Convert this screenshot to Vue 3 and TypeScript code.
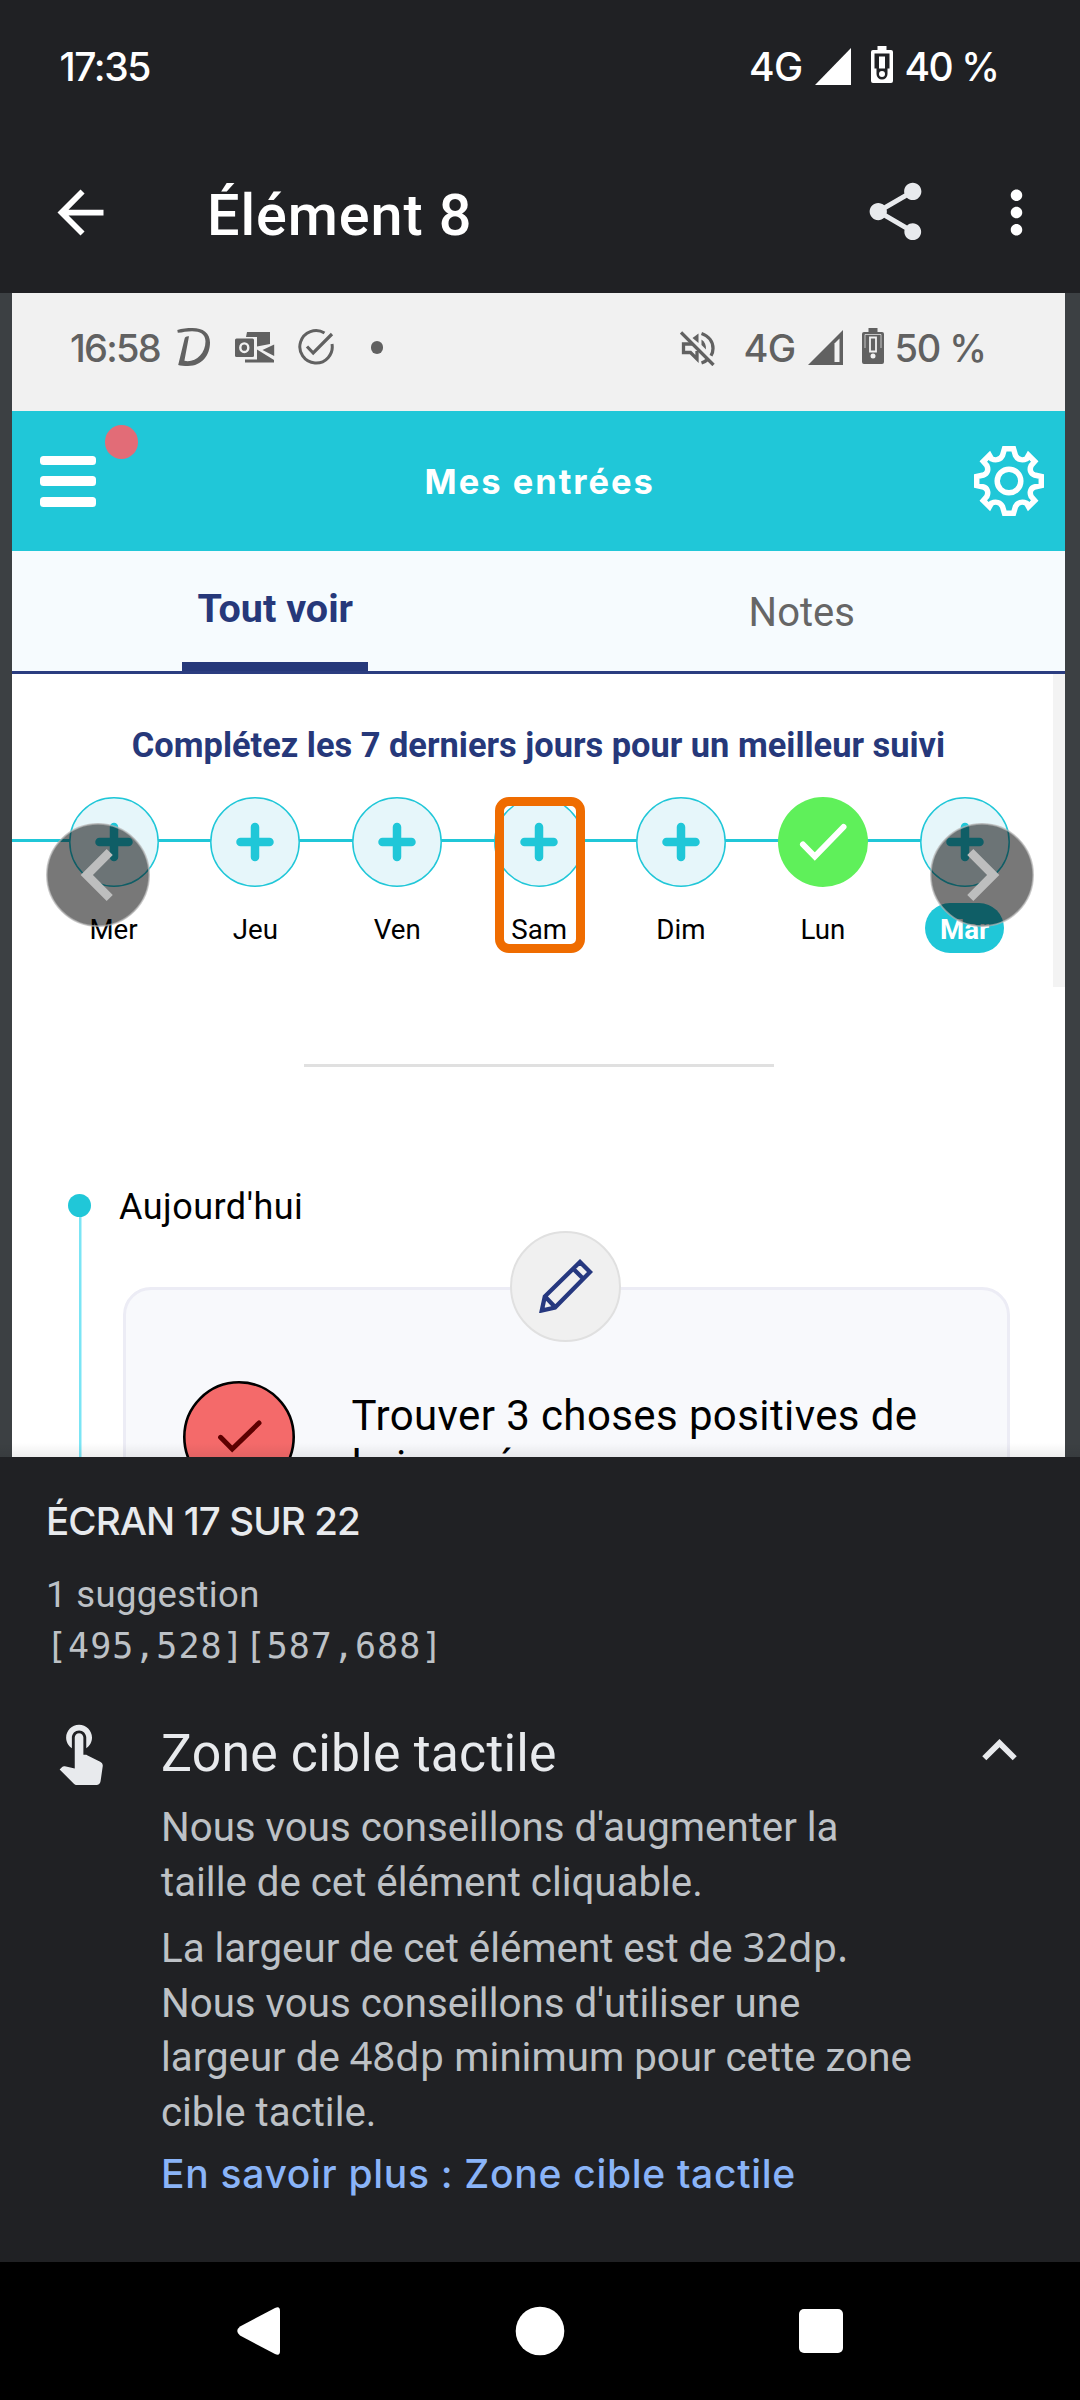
<script setup lang="ts">
interface Day {
  label: string
  done?: boolean
  today?: boolean
  flagged?: boolean
}

const days: Day[] = [
  { label: 'Mer' },
  { label: 'Jeu' },
  { label: 'Ven' },
  { label: 'Sam', flagged: true },
  { label: 'Dim' },
  { label: 'Lun', done: true },
  { label: 'Mar', today: true },
]

const bounds = '[495,528][587,688]'
</script>

<template>
  <div class="phone">
    <header class="top">
      <div class="status">
        <span class="clock">17:35</span>
        <div class="status-right">
          <span class="net">4G</span>
          <svg class="signal" width="36" height="37" viewBox="0 0 36 37"><path d="M36 0V37H0Z" fill="#fff" /></svg>
          <svg class="battery" width="22" height="37" viewBox="0 0 22 37">
            <path d="M6.500 0h9v4H20a2 2 0 0 1 2 2v29a2 2 0 0 1-2 2H2a2 2 0 0 1-2-2V6a2 2 0 0 1 2-2h4.500Z" fill="#fff" />
            <path d="M3.500 7.500h15v15h-2v5.500a5.500 5.500 0 0 1-11 0v-5.500h-2Z" fill="#202124" />
            <path d="M8 10.500h6v12H8Z" fill="#fff" />
            <circle cx="11" cy="28" r="3" fill="#fff" />
          </svg>
          <span class="percent">40 %</span>
        </div>
      </div>
      <div class="appbar">
        <svg class="back" width="69" height="69" viewBox="0 0 24 24" fill="#fff"><path d="M20 11H7.830l5.590-5.590L12 4l-8 8 8 8 1.410-1.410L7.830 13H20v-2z" /></svg>
        <h1>Élément 8</h1>
        <svg class="share" width="69" height="69" viewBox="0 0 24 24" fill="#e8eaed"><path d="M18 16.080c-.76 0-1.440.3-1.960.77L8.910 12.700c.05-.23.09-.46.09-.7s-.04-.47-.09-.7l7.050-4.110c.54.5 1.250.81 2.040.81 1.660 0 3-1.340 3-3s-1.340-3-3-3-3 1.340-3 3c0 .24.04.47.09.7L8.040 9.810C7.500 9.310 6.790 9 6 9c-1.660 0-3 1.340-3 3s1.340 3 3 3c.79 0 1.500-.31 2.040-.81l7.120 4.160c-.05.21-.08.43-.08.65 0 1.610 1.310 2.920 2.920 2.920s2.920-1.310 2.920-2.920-1.310-2.920-2.920-2.920z" /></svg>
        <svg class="more" width="69" height="69" viewBox="0 0 24 24" fill="#fff"><path d="M12 8c1.100 0 2-.9 2-2s-.9-2-2-2-2 .9-2 2 .9 2 2 2zm0 2c-1.100 0-2 .9-2 2s.9 2 2 2 2-.9 2-2-.9-2-2-2zm0 6c-1.100 0-2 .9-2 2s.9 2 2 2 2-.9 2-2-.9-2-2-2z" /></svg>
      </div>
    </header>

    <section class="viewer">
      <div class="shot">
        <div class="shot-status">
          <span class="s-clock">16:58</span>
          <svg class="i-d" width="34" height="40" viewBox="0 0 34 40"><path d="M.3 3C5 1.500 10 1 15.500 1C26 1 33 6 33 15.500C33 28 25 39 11 39C7 39 3.500 38.800 1.200 38L7.500 12C7.900 10 9 9 12 9.200L7.400 33.800C18 36 28.500 27 28.500 14.500C28.500 7 23 4.200 15 4.200C10 4.200 6 5.300 .8 5.800Z" fill="#616161" /></svg>
          <svg class="i-outlook" width="40" height="32" viewBox="0 0 40 32">
            <path d="M12 1H35V13L22 15.500V6H11Z" fill="#616161" />
            <path d="M39.200 13.500V25L27.500 19Z" fill="#616161" />
            <path d="M22 18.500 39 29V31.500H10V28.500H22Z" fill="#616161" />
            <rect x="0" y="7.500" width="19" height="18.500" rx="1.500" fill="#616161" />
            <ellipse cx="9.300" cy="16.700" rx="4" ry="4.300" fill="none" stroke="#f1f1f1" stroke-width="2.400" />
          </svg>
          <svg class="i-check" width="36" height="36" viewBox="0 0 36 36" fill="none" stroke="#616161" stroke-width="3">
            <path d="M26.500 4A16.200 16.200 0 1 0 34 15" />
            <path d="M9 17.500 15.200 24 34 5" stroke-width="3.200" />
          </svg>
          <i class="i-dot"></i>
          <div class="s-right">
            <svg class="i-mute" width="35" height="35" viewBox="0 0 35 35" fill="none" stroke="#616161" stroke-width="3.300">
              <path d="M1 1.500 33.500 34" />
              <path d="M12 13H3.500V21.500H10.500L17 28V20" />
              <path d="M12.500 7 18.500 2.500V12Z" fill="#616161" stroke="none" />
              <path d="M21.500 8.500V14L26 18.500C26.200 14 24.500 10.500 21.500 8.500Z" fill="#616161" stroke="none" />
              <path d="M21.500 2.500C29 5 33 11 33 17.500C33 20 32.300 22.500 31 24.800" />
              <path d="M21.500 32C24 31.200 26 30 27.500 28.500" />
            </svg>
            <span class="s-net">4G</span>
            <svg class="s-signal" width="35" height="35" viewBox="0 0 35 35"><path d="M35 0V35H0Z" fill="#616161" /><path d="M26.500 13.500 31.500 8.500V32H26.500Z" fill="#f1f1f1" /></svg>
            <svg class="s-battery" width="22" height="36" viewBox="0 0 22 36">
              <path d="M6.500 0h9v4H20a2 2 0 0 1 2 2v28a2 2 0 0 1-2 2H2a2 2 0 0 1-2-2V6a2 2 0 0 1 2-2h4.500Z" fill="#616161" />
              <path d="M3 20V6.500H19V20" fill="none" stroke="#f1f1f1" stroke-width=".7" />
              <path d="M8 9.500h6v14H8Z" fill="#616161" stroke="#f1f1f1" stroke-width="1.800" />
              <circle cx="11" cy="28" r="2.500" fill="#f1f1f1" />
            </svg>
            <span class="s-percent">50 %</span>
          </div>
        </div>

        <div class="shot-bar">
          <div class="burger"><i></i><i></i><i></i></div>
          <b class="alert"></b>
          <span class="bar-title">Mes entrées</span>
          <svg class="gear" width="70" height="70" viewBox="-35 -35 70 70" fill="none" stroke="#fff" stroke-width="5.500">
            <path d="M-4.500 -32.300H4.500L6.500 -25.500C8.500 -21.500 13 -20 17.500 -22.200L19.500 -25.700L25.700 -19.500L22.200 -15.500C20 -11 22 -7 25.500 -6L32.300 -4.500V4.500L25.500 6C22 7 20 11 22.200 15.500L25.700 19.500L19.500 25.700L17.500 22.200C13 20 8.500 21.500 6.500 25.500L4.500 32.300H-4.500L-6.500 25.500C-8.500 21.500 -13 20 -17.500 22.200L-19.500 25.700L-25.700 19.500L-22.200 15.500C-20 11 -22 7 -25.500 6L-32.300 4.500V-4.500L-25.500 -6C-22 -7 -20 -11 -22.200 -15.500L-25.700 -19.500L-19.500 -25.700L-17.500 -22.200C-13 -20 -8.500 -21.500 -6.500 -25.500Z" />
            <circle r="11.800" />
          </svg>
        </div>

        <nav class="tabs">
          <div class="tab on"><span>Tout voir</span><i></i></div>
          <div class="tab"><span>Notes</span></div>
        </nav>

        <div class="week">
          <h2>Complétez les 7 derniers jours pour un meilleur suivi</h2>
          <div class="days">
            <div v-for="day in days" :key="day.label" class="day" :class="{ today: day.today }">
              <svg width="90" height="90" viewBox="-45 -45 90 90">
                <template v-if="day.done">
                  <circle r="45" fill="#5ff05a" />
                  <path d="M-20 2.500-8.200 14.500 20.500-15" fill="none" stroke="#fff" stroke-width="6" stroke-linecap="round" />
                </template>
                <template v-else>
                  <circle r="44.200" fill="#e6f6fa" stroke="#20c7d8" stroke-width="1.500" />
                  <path d="M-14.500 0H14.500M0-15V15" stroke="#20c7d8" stroke-width="8.500" stroke-linecap="round" />
                </template>
              </svg>
              <span>{{ day.label }}</span>
              <div v-if="day.flagged" class="flag"></div>
            </div>
          </div>
        </div>

        <hr />

        <div class="timeline">
          <div class="rail"><i></i></div>
          <div class="entries">
            <p class="when">Aujourd'hui</p>
            <article>
              <div class="edit">
                <svg width="54" height="54" viewBox="0 0 54 54" fill="none" stroke="#26387f" stroke-width="4.300">
                  <path d="M2.800 51.500 5.800 37.500 41 3 51 13 16 48.500ZM6 37.500 16 48M34.500 10 44 19.500" />
                </svg>
              </div>
              <svg class="mark" width="112" height="112" viewBox="-56 -56 112 112">
                <circle r="54.700" fill="#f46a6a" stroke="#000" stroke-width="2.600" />
                <path d="M-18.400.3-6.800 12 20-14" fill="none" stroke="#5c0000" stroke-width="5" stroke-linecap="round" />
              </svg>
              <p class="task">Trouver 3 choses positives de<br />la journée</p>
            </article>
          </div>
        </div>
      </div>

      <svg class="page prev" width="104" height="104" viewBox="0 0 24 24">
        <circle cx="12" cy="12" r="11.800" fill="#000" fill-opacity=".53" stroke="#b4b4b4" stroke-opacity=".7" stroke-width=".4" />
        <path d="M15.410 7.410L14 6l-6 6 6 6 1.410-1.410L10.830 12z" fill="#bdbebe" />
      </svg>
      <svg class="page next" width="104" height="104" viewBox="0 0 24 24">
        <circle cx="12" cy="12" r="11.800" fill="#000" fill-opacity=".53" stroke="#b4b4b4" stroke-opacity=".7" stroke-width=".4" />
        <path d="M10 6L8.590 7.410 13.170 12l-4.580 4.590L10 18l6-6z" fill="#bdbebe" />
      </svg>
      <div class="shade"></div>
    </section>

    <section class="panel">
      <h3>ÉCRAN 17 SUR 22</h3>
      <p class="count">1 suggestion</p>
      <p class="bounds">{{ bounds }}</p>
      <div class="issue">
        <svg class="touch" width="69" height="69" viewBox="0 0 24 24" fill="#e8eaed"><path d="M9 11.240V7.500C9 6.120 10.120 5 11.500 5S14 6.120 14 7.500v3.740c1.210-.81 2-2.180 2-3.740C16 5.010 13.990 3 11.500 3S7 5.010 7 7.500c0 1.560.79 2.930 2 3.740zm9.840 4.630l-4.540-2.260c-.17-.07-.35-.11-.54-.11H13v-6c0-.83-.67-1.500-1.500-1.500S10 6.670 10 7.500v10.740l-3.430-.72c-.08-.01-.15-.03-.24-.03-.31 0-.59.13-.79.33l-.79.8 4.940 4.940c.27.27.65.44 1.060.44h6.790c.75 0 1.330-.55 1.440-1.280l.75-5.270c.01-.07.02-.14.02-.2 0-.62-.38-1.160-.91-1.380z" /></svg>
        <div class="detail">
          <h4>Zone cible tactile</h4>
          <p>Nous vous conseillons d'augmenter la<br />taille de cet élément cliquable.</p>
          <p>La largeur de cet élément est de <code>32dp.</code><br />Nous vous conseillons d'utiliser une<br />largeur de <code>48dp</code> minimum pour cette zone<br />cible tactile.</p>
          <a>En savoir plus : Zone cible tactile</a>
        </div>
        <svg class="fold" width="69" height="69" viewBox="0 0 24 24" fill="#e8eaed"><path d="M12 8l-6 6 1.410 1.410L12 10.830l4.590 4.580L18 14z" /></svg>
      </div>
    </section>

    <footer class="sysnav">
      <svg width="46" height="50" viewBox="0 0 46 50"><path d="M39 2 4 20.500Q-1.500 25 4 29.500L39 48Q44 50.500 44 45V5Q44-.5 39 2Z" fill="#fff" /></svg>
      <svg width="50" height="50" viewBox="0 0 50 50"><circle cx="25" cy="25" r="24.300" fill="#fff" /></svg>
      <svg width="44" height="44" viewBox="0 0 44 44"><rect width="44" height="44" rx="5" fill="#fff" /></svg>
    </footer>
  </div>
</template>

<style>
body {
  margin: 0;
  background: #000;
}
</style>

<style scoped>
.phone {
  width: 1080px;
  height: 2400px;
  display: flex;
  flex-direction: column;
  overflow: hidden;
  font-family: Roboto, sans-serif;
  background: #202124;
}
h1, h2, h3, h4, p, hr { margin: 0; }
svg { display: block; flex: none; }
span, h1, h2, h3, h4, p, a { white-space: nowrap; }

.top { height: 293px; flex: none; color: #fff; }
.status {
  height: 132px;
  display: flex;
  align-items: center;
  padding-left: 59.5px;
  font: 550 39px/48px Inter, sans-serif;
}
.clock { letter-spacing: -1.4px; padding-top: 2px; }
.status-right { margin-left: auto; display: flex; align-items: center; }
.net { width: 66px; letter-spacing: -0.6px; padding-top: 2px; }
.battery { margin: -3px 11.5px 0 20px; }
.signal { margin-top: 1px; }
.percent { width: 175.5px; letter-spacing: -1.5px; padding-top: 2px; }

.appbar { height: 161px; display: flex; align-items: center; padding-left: 45.5px; }
.appbar h1 {
  margin-left: 92.5px;
  padding-top: 6px;
  font-size: 57.5px;
  line-height: 70px;
  font-weight: 500;
  letter-spacing: 0.95px;
}
.share { margin: -2px 52px 0 auto; }
.more { margin-right: 29px; }

.viewer {
  position: relative;
  height: 1164px;
  flex: none;
  overflow: hidden;
  padding: 0 15px 0 12px;
  background: #3c4043;
}
.shot { height: 1164px; overflow: hidden; background: #fff; }
.shot-status {
  height: 108px;
  padding: 0 0 10px 58px;
  display: flex;
  align-items: center;
  background: #f1f1f1;
  color: #616161;
  font: 470 38px/48px Inter, sans-serif;
}
.s-clock { width: 106.5px; letter-spacing: -1.75px; padding-top: 1px; }
.i-outlook { margin-left: 24px; }
.i-check { margin-left: 23.5px; }
.i-dot { width: 12.5px; height: 12.5px; border-radius: 50%; background: #616161; margin: 1px 0 0 36.5px; }
.s-right { margin-left: auto; display: flex; align-items: center; width: 385px; }
.i-mute { margin-right: 28.5px; margin-top: 2px; }
.s-net { width: 64px; letter-spacing: -0.6px; padding-top: 1px; }
.s-signal { margin-top: 1px; }
.s-battery { margin: -3px 11px 0 19px; }
.s-percent { letter-spacing: -1.15px; padding-top: 1px; }

.shot-bar {
  position: relative;
  height: 140px;
  display: flex;
  align-items: center;
  justify-content: space-between;
  padding: 0 20.5px 0 28px;
  background: #20c7d8;
}
.burger { width: 56px; height: 51px; display: flex; flex-direction: column; justify-content: space-between; }
.burger i { height: 9.5px; border-radius: 3.5px; background: #fff; }
.alert {
  position: absolute;
  left: 92.5px;
  top: 14px;
  width: 33.5px;
  height: 34px;
  border-radius: 50%;
  background: #e26c77;
}
.bar-title {
  margin-left: 9px;
  padding-top: 1px;
  color: #fff;
  font: 700 34.5px/44px Inter, sans-serif;
  letter-spacing: 1.98px;
}

.tabs { height: 120px; display: flex; background: #f6fbfe; border-bottom: 3px solid #2b3d80; }
.tab {
  flex: 1;
  display: flex;
  flex-direction: column;
  align-items: center;
  padding-top: 38px;
  font-size: 40px;
  line-height: 48px;
  color: #666;
}
.tab.on { padding-top: 34px; height: 86px; color: #26387a; font-weight: 700; font-size: 39.5px; }
.tab i { width: 186px; height: 9px; margin-top: auto; background: #26387a; }

.week { height: 313px; border-right: 12px solid #f3f3f3; position: relative; }
.week h2 {
  padding: 51px 0 31px;
  margin-right: -12px;
  text-align: center;
  color: #26387a;
  font-size: 34.4px;
  line-height: 41px;
  font-weight: 700;
}
.days { position: relative; width: 993px; margin-left: 30.6px; display: flex; }
.days::before {
  content: '';
  position: absolute;
  left: -31px;
  top: 42px;
  width: 930px;
  height: 3px;
  background: #20c7d8;
}
.day { position: relative; flex: 1; display: flex; flex-direction: column; align-items: center; }
.day span {
  margin-top: 16px;
  height: 47px;
  padding-top: 3px;
  font-size: 27.7px;
  line-height: 48px;
  color: #000;
}
.day.today span { width: 79px; text-align: center; border-radius: 25px; background: #20c7d8; color: #fff; font-weight: 700; }
.flag {
  position: absolute;
  left: 26.5px;
  top: 0;
  width: 72px;
  height: 138px;
  border: 9px solid #ef6c00;
  border-radius: 14px;
}

hr { width: 470px; height: 3px; margin: 77px 0 0 291.5px; border: 0; background: #e0e0e0; }

.timeline { display: flex; margin-top: 127px; padding-left: 56px; }
.rail { width: 23px; height: 300px; display: flex; justify-content: center; background: linear-gradient(#7be5f5, #7be5f5) 11px 20px / 2.5px 300px no-repeat; }
.rail i { width: 23px; height: 23px; border-radius: 50%; background: #20c7d8; }
.entries { flex: 1; }
.when { margin: -11px 0 0 28px; font-size: 36px; line-height: 48px; letter-spacing: 0.48px; color: #000; }
article {
  position: relative;
  box-sizing: border-box;
  width: 887px;
  height: 300px;
  margin: 56px 0 0 32px;
  padding: 91px 0 0 57px;
  display: flex;
  align-items: flex-start;
  border: 3px solid #ececf5;
  border-radius: 28px;
  background: #f8f9fc;
}
.edit {
  position: absolute;
  left: 384px;
  top: -59.5px;
  width: 107px;
  height: 107px;
  display: flex;
  align-items: center;
  justify-content: center;
  border: 2.5px solid #e0e0e0;
  border-radius: 50%;
  background: #f0f0f0;
}
.task { margin: 9.5px 0 0 56.5px; font-size: 42px; line-height: 50.7px; letter-spacing: 0.4px; color: #000; }

.page { position: absolute; top: 530px; }
.prev { left: 46.3px; }
.next { left: 929.7px; }
.shade { position: absolute; left: 0; right: 0; bottom: 0; height: 14px; background: linear-gradient(rgba(0, 0, 0, 0), rgba(0, 0, 0, 0.07)); }

.panel { height: 805px; flex: none; padding-left: 46px; box-sizing: border-box; background: #202124; }
.panel h3 {
  margin-top: 39px;
  color: #e8eaed;
  font: 550 38.5px/50px Inter, sans-serif;
  letter-spacing: -0.9px;
}
.count { margin-top: 24px; color: #bdc1c6; font-size: 36.5px; line-height: 50px; letter-spacing: 0.35px; }
.bounds { color: #bdc1c6; font: 35px/50px 'DejaVu Sans Mono', monospace; letter-spacing: 1px; margin-top: 1px; }
.issue { display: flex; margin-top: 44.5px; }
.detail { width: 804px; margin-left: 46px; color: #bdc1c6; font-size: 40.25px; line-height: 54.5px; }
.detail h4 { margin-top: 4px; color: #e8eaed; font-size: 51.75px; line-height: 68px; font-weight: 400; letter-spacing: 0.2px; }
.detail p { margin-top: 13.5px; }
.detail p + p { margin-top: 12px; }
.detail code { font-family: 'Noto Sans', sans-serif; font-size: 39.5px; line-height: 1; letter-spacing: 0.2px; }
.detail a { display: block; margin-top: 7px; color: #8ab4f8; font: 500 39px/54px Inter, sans-serif; letter-spacing: 0.7px; }

.sysnav { height: 138px; display: flex; align-items: center; background: #000; padding-left: 236px; }
.sysnav svg:nth-child(2) { margin: 0 234px 0 233px; }
</style>
